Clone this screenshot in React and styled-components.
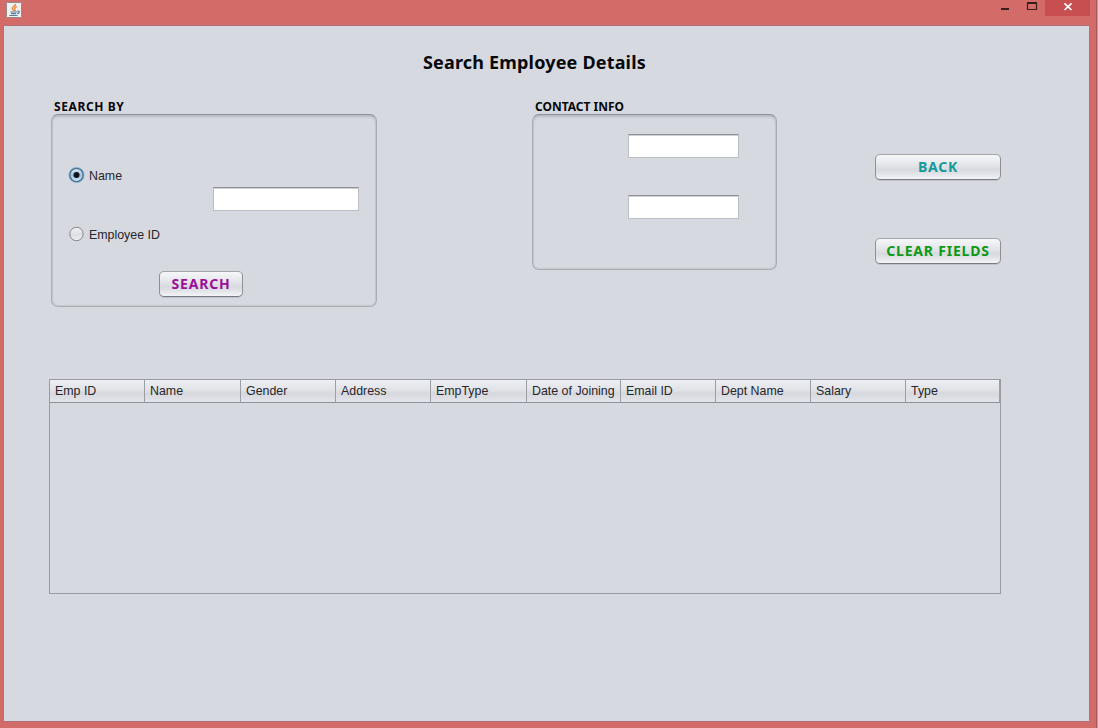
import React from "react";
import styled, { createGlobalStyle } from "styled-components";

const Global = createGlobalStyle`
  * { box-sizing: border-box; }
  html, body, #root { margin: 0; height: 100%; }
  body { overflow: hidden; background: #c9989c; font-family: "Liberation Sans", Arial, sans-serif; font-size: 12.4px; color: #26262b; }
  button, input { font: inherit; margin: 0; }
`;

const heading = `"Noto Sans", Tahoma, sans-serif`;

const Frame = styled.div`
  width: 1097px;
  height: 728px;
  display: flex;
  flex-direction: column;
  background: #d36c69;
  padding: 0 6px 6px 3px;
  border-right: 1px solid #a65a59;
`;

const TitleBar = styled.header`
  height: 25px;
  flex: none;
  display: flex;
  justify-content: space-between;
  align-items: flex-start;
  padding: 2px 0 0 3px;
`;

const WindowControls = styled.div`
  display: flex;
  margin-top: -2px;
`;

const ControlButton = styled.button`
  width: ${(p) => p.$width}px;
  height: 16px;
  padding: 0;
  border: 0;
  display: block;
  background: ${(p) => (p.$close ? "#c84f50" : "transparent")};
  svg { display: block; }
`;

const Client = styled.main`
  flex: 1;
  border: 1px solid #b27175;
  background: #d6d9e0;
  padding: 0 88px 0 45px;
`;

const Title = styled.h1`
  margin: 0;
  padding: 24px 0 0 374px;
  height: 73px;
  font: bold 18px/24px ${heading};
  letter-spacing: 0.18px;
  color: #08080a;
  white-space: nowrap;
`;

const Upper = styled.section`
  height: 280px;
  display: flex;
  align-items: flex-start;
  padding-left: 2px;
`;

const Group = styled.div`
  width: ${(p) => p.$width}px;
  flex: none;
  margin-right: ${(p) => p.$gap}px;
`;

const GroupTitle = styled.h2`
  margin: 0;
  height: 15px;
  padding-left: 3px;
  font: bold 12px/15px ${heading};
  letter-spacing: ${(p) => p.$tracking}px;
  white-space: nowrap;
  color: #08080a;
`;

const Panel = styled.div`
  height: ${(p) => p.$height}px;
  border: 1px solid #a9acb3;
  border-top-color: #8d9096;
  border-radius: 7px;
  background: #d6d9e0;
  box-shadow: inset 0 2px 2px #b9bcc3, inset 0 0 1px 1px #c6c9cf;
`;

const SearchPanel = styled(Panel)`
  padding: 52px 17px 0 16px;
`;

const ContactPanel = styled(Panel)`
  display: flex;
  flex-direction: column;
  align-items: flex-end;
  gap: 37px;
  padding: 19px 37px 0 0;
`;

const SearchRow = styled.div`
  height: 77px;
  display: flex;
  justify-content: space-between;
`;

const Radios = styled.div`
  display: flex;
  flex-direction: column;
  gap: 42px;
`;

const RadioLabel = styled.label`
  height: 17px;
  display: flex;
  align-items: center;
  gap: 4px;
  white-space: nowrap;
  svg { display: block; }
`;

const Field = styled.input`
  display: block;
  width: ${(p) => p.$width}px;
  height: 24px;
  margin-top: ${(p) => p.$top || 0}px;
  padding: 2px 5px;
  border: 1px solid #bcbfc5;
  border-top-color: #8e9197;
  border-radius: 0;
  background: #fff;
  box-shadow: inset 0 1px 0 #d0d1d4;
  outline: none;
`;

const Button = styled.button`
  display: block;
  width: ${(p) => p.$width}px;
  height: 26px;
  padding: 0;
  border: 1px solid #8d9096;
  border-top-color: #a2a5aa;
  border-bottom-color: #777a80;
  border-radius: 5px;
  background: linear-gradient(#f6f7f9 0%, #e5e6ea 40%, #d8dae0 60%, #dfe1e6 75%, #f3f4f7 100%);
  box-shadow: 0 1px 0 #bfc2c9;
  color: ${(p) => p.$color};
  font: bold 14px/24px ${heading};
  letter-spacing: 0.8px;
  white-space: nowrap;
`;

const SubmitRow = styled.div`
  margin: 27px 0 0 91px;
`;

const Actions = styled.div`
  display: flex;
  flex-direction: column;
  gap: 58px;
  padding-top: 55px;
`;

const TableFrame = styled.div`
  width: 952px;
  height: 215px;
  border: 1px solid #979ba4;
`;

const Table = styled.table`
  width: 950px;
  table-layout: fixed;
  border-collapse: separate;
  border-spacing: 0;
`;

const HeadCell = styled.th`
  width: ${(p) => p.$width}px;
  height: 23px;
  padding: 0 0 0 5px;
  border-right: 1px solid #9b9ea6;
  border-bottom: 1px solid #8d9199;
  background: linear-gradient(#eeeff2 0%, #e2e3e8 45%, #d6d8de 60%, #e4e5ea 100%);
  text-align: left;
  font-weight: normal;
  line-height: 18px;
  white-space: nowrap;
`;

const JavaIcon = () => (
  <svg width="16" height="16" viewBox="0 0 16 16">
    <rect x="0.5" y="0.5" width="15" height="15" rx="1" fill="#f1f0ee" stroke="#8d8a8c" />
    <path d="M9.500 2C9.800 3.800 6 4.600 6.200 6.300C6.300 7.400 7.400 7.800 7.500 9M10.800 4.600C8.600 5.400 8.100 6.300 8.900 7.300C9.400 8 9 8.700 8.500 9.200" fill="none" stroke="#e2843a" strokeWidth="1.400" />
    <path d="M4.300 10H11M5 11.600H10M3.300 13.500H11.500M11.300 9.300C14 8.600 13.800 11.300 11 11.700" fill="none" stroke="#557f9c" strokeWidth="1.200" />
  </svg>
);

const RadioMark = ({ checked }) => (
  <svg width="17" height="17" viewBox="0 0 17 17">
    <defs>
      <linearGradient id={checked ? "radioOn" : "radioOff"} x1="0" y1="0" x2="0" y2="1">
        <stop offset="0" stopColor={checked ? "#dcebf6" : "#f4f4f6"} />
        <stop offset="0.55" stopColor={checked ? "#9fc0da" : "#dcdee2"} />
        <stop offset="1" stopColor={checked ? "#d4ebf9" : "#f0f1f4"} />
      </linearGradient>
    </defs>
    {checked && <circle cx="8.5" cy="8" r="7.6" fill="none" stroke="#8fb8d5" strokeWidth="1" />}
    <circle cx="8.5" cy="8" r="6.7" fill={`url(#${checked ? "radioOn" : "radioOff"})`} stroke={checked ? "#48708f" : "#83868c"} strokeWidth={checked ? 1.3 : 1} />
    {checked && <circle cx="8.5" cy="8" r="3" fill="#101418" />}
  </svg>
);

const columns = [
  ["Emp ID", 95],
  ["Name", 96],
  ["Gender", 95],
  ["Address", 95],
  ["EmpType", 96],
  ["Date of Joining", 94],
  ["Email ID", 95],
  ["Dept Name", 95],
  ["Salary", 95],
  ["Type", 94],
];

export default function App() {
  return (
    <>
      <Global />
      <Frame>
        <TitleBar>
          <JavaIcon />
          <WindowControls>
            <ControlButton $width={27} aria-label="Minimize">
              <svg width="27" height="16"><path d="M10 9h8" stroke="#35201f" strokeWidth="2" /></svg>
            </ControlButton>
            <ControlButton $width={27} aria-label="Maximize">
              <svg width="27" height="16"><path d="M9.500 3v6.500h9V3M9 3h10" fill="none" stroke="#35201f" strokeWidth="1.200" /><path d="M9 3h10" stroke="#35201f" strokeWidth="2" /></svg>
            </ControlButton>
            <ControlButton $width={45} $close aria-label="Close">
              <svg width="45" height="16"><path d="M19.500 3.300l7 6.700M26.500 3.300l-7 6.700" stroke="#fff" strokeWidth="1.700" /></svg>
            </ControlButton>
          </WindowControls>
        </TitleBar>
        <Client>
          <Title>Search Employee Details</Title>
          <Upper>
            <Group $width={326} $gap={155}>
              <GroupTitle $tracking={0.6}>SEARCH BY</GroupTitle>
              <SearchPanel $height={193}>
                <SearchRow>
                  <Radios>
                    <RadioLabel><RadioMark checked />Name</RadioLabel>
                    <RadioLabel><RadioMark />Employee ID</RadioLabel>
                  </Radios>
                  <Field $width={146} $top={20} />
                </SearchRow>
                <SubmitRow>
                  <Button $width={84} $color="#990f99">SEARCH</Button>
                </SubmitRow>
              </SearchPanel>
            </Group>
            <Group $width={245} $gap={98}>
              <GroupTitle $tracking={0}>CONTACT INFO</GroupTitle>
              <ContactPanel $height={156}>
                <Field $width={111} />
                <Field $width={111} />
              </ContactPanel>
            </Group>
            <Actions>
              <Button $width={126} $color="#159a9a">BACK</Button>
              <Button $width={126} $color="#0b9a16">CLEAR FIELDS</Button>
            </Actions>
          </Upper>
          <TableFrame>
            <Table>
              <thead>
                <tr>{columns.map(([name, width]) => <HeadCell key={name} $width={width}>{name}</HeadCell>)}</tr>
              </thead>
            </Table>
          </TableFrame>
        </Client>
      </Frame>
    </>
  );
}
